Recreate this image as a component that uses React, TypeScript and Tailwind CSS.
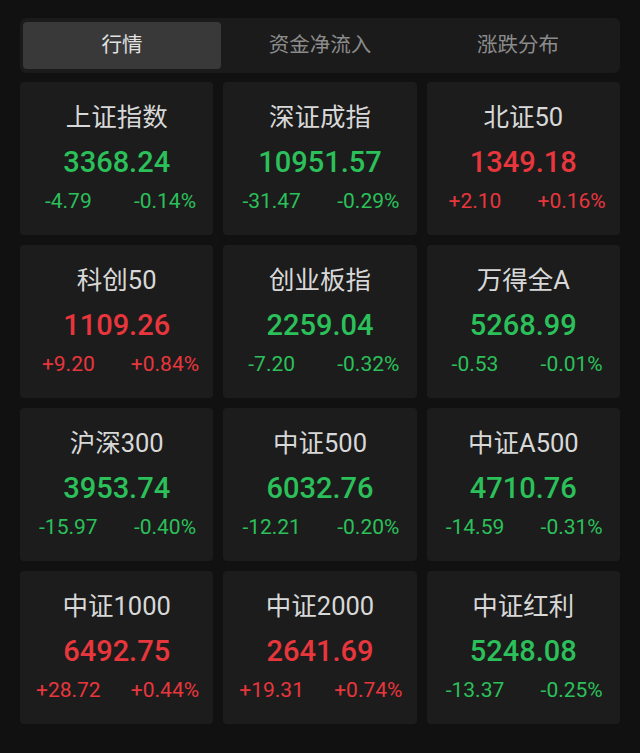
import React from "react";

type Item = { name: string; price: string; chg: string; pct: string; up: boolean };

const items: Item[] = [
  { name: "上证指数", price: "3368.24", chg: "-4.79", pct: "-0.14%", up: false },
  { name: "深证成指", price: "10951.57", chg: "-31.47", pct: "-0.29%", up: false },
  { name: "北证50", price: "1349.18", chg: "+2.10", pct: "+0.16%", up: true },
  { name: "科创50", price: "1109.26", chg: "+9.20", pct: "+0.84%", up: true },
  { name: "创业板指", price: "2259.04", chg: "-7.20", pct: "-0.32%", up: false },
  { name: "万得全A", price: "5268.99", chg: "-0.53", pct: "-0.01%", up: false },
  { name: "沪深300", price: "3953.74", chg: "-15.97", pct: "-0.40%", up: false },
  { name: "中证500", price: "6032.76", chg: "-12.21", pct: "-0.20%", up: false },
  { name: "中证A500", price: "4710.76", chg: "-14.59", pct: "-0.31%", up: false },
  { name: "中证1000", price: "6492.75", chg: "+28.72", pct: "+0.44%", up: true },
  { name: "中证2000", price: "2641.69", chg: "+19.31", pct: "+0.74%", up: true },
  { name: "中证红利", price: "5248.08", chg: "-13.37", pct: "-0.25%", up: false },
];

const font = { fontFamily: 'Roboto, "Noto Sans CJK SC", sans-serif' };

export default function App() {
  return (
    <div className="w-[640px] h-[753px] bg-[#111111] px-[20px] pt-[18px]" style={font}>
      <div className="grid grid-cols-3 rounded-[6px] bg-[#1b1b1b] p-[3px] py-[4px]">
        {["行情", "资金净流入", "涨跌分布"].map((t, i) => (
          <div
            key={t}
            className={
              i === 0
                ? "h-[47px] flex items-center justify-center rounded-[4px] bg-[#393939] text-[#e2e2e2] text-[20.5px]"
                : "h-[47px] flex items-center justify-center text-[#8c8c8c] text-[20.5px]"
            }
          >
            {t}
          </div>
        ))}
      </div>
      <div className="mt-[9px] grid grid-cols-3 gap-[10px]">
        {items.map((it) => {
          const c = it.up ? "text-[#e8363d]" : "text-[#2bc05a]";
          return (
            <div key={it.name} className="h-[153px] rounded-[4px] bg-[#1c1c1c] flex flex-col items-center pt-[19px]">
              <div className="text-[25.5px] leading-[32px] text-[#d8d8d8]">{it.name}</div>
              <div className={`mt-[12px] text-[29px] leading-[34px] font-medium ${c}`}>{it.price}</div>
              <div className={`mt-[9px] grid grid-cols-2 w-full text-[21px] leading-[26px] ${c}`}>
                <div className="text-center">{it.chg}</div>
                <div className="text-center">{it.pct}</div>
              </div>
            </div>
          );
        })}
      </div>
    </div>
  );
}
